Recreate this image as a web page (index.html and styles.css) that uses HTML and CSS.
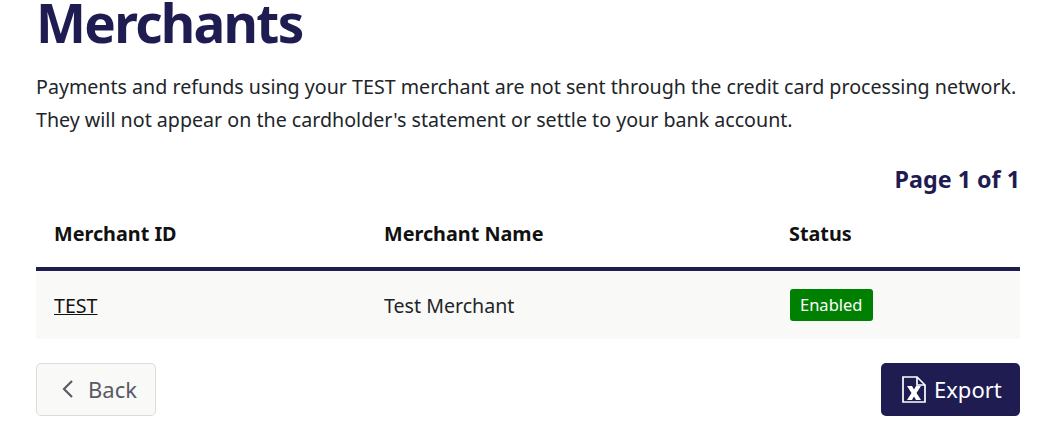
FILE: index.html
```html
<!DOCTYPE html>
<html lang="en">
<head>
<meta charset="utf-8">
<title>Merchants</title>
<link rel="stylesheet" href="styles.css">
</head>
<body>
<main class="page">
  <h1 class="title">Merchants</h1>
  <p class="intro">Payments and refunds using your TEST merchant are not sent through the credit card processing network. They will not appear on the cardholder's statement or settle to your bank account.</p>
  <div class="pager">Page 1 of 1</div>
  <table class="grid">
    <thead>
      <tr><th class="c1">Merchant ID</th><th class="c2">Merchant Name</th><th class="c3">Status</th></tr>
    </thead>
    <tbody>
      <tr>
        <td><a href="#">TEST</a></td>
        <td>Test Merchant</td>
        <td><span class="badge">Enabled</span></td>
      </tr>
    </tbody>
  </table>
  <div class="actions">
    <a class="btn back" href="#">
      <svg class="chev" width="14" height="20" viewBox="0 0 14 20"><path d="M11 2 3 10l8 8" fill="none" stroke="currentColor" stroke-width="2.2"/></svg>
      <span>Back</span>
    </a>
    <a class="btn export" href="#">
      <svg class="xls" width="24" height="27" viewBox="0 0 24 27"><path d="M1 1h14l8 8v17H1z" fill="none" stroke="currentColor" stroke-width="1.7"/><path d="M15 1v8h8" fill="none" stroke="currentColor" stroke-width="1.7"/><path d="M5 10h5l2 3.500 2-3.500h5l-4.500 7 4.500 7h-5l-2-3.500-2 3.500H5l4.500-7z" fill="currentColor"/></svg>
      <span>Export</span>
    </a>
  </div>
</main>
</body>
</html>
```
FILE: styles.css
```css
html, body { margin: 0; padding: 0; background: #fff; }
body { font-family: "Noto Sans", sans-serif; color: #212529; font-size: 19.6px; overflow: hidden; }
.page { padding: 0 28px 0 36px; }
.title { margin: 0; font-size: 53px; letter-spacing: -1.7px; line-height: 45px; font-weight: 700; color: #1f1c52; }
.intro { margin: 26px 0 0; line-height: 32.5px; font-size: 19.65px; }
.pager { margin-top: 27px; text-align: right; font-weight: 700; font-size: 23.3px; line-height: 32px; color: #1f1c52; }
.grid { width: 100%; margin-top: 4px; border-collapse: collapse; table-layout: fixed; }
.grid th { box-sizing: border-box; text-align: left; font-size: 19.8px; font-weight: 700; padding: 19px 18px 17px; line-height: 32px; border-bottom: 4px solid #1f1c52; color: #111; }
.c1 { width: 330px; }
.c2 { width: 405px; }
.grid td { padding: 16px 18px 14px; line-height: 36px; background: #f9f9f7; height: 36px; }
.grid a { color: #111; }
.badge { display: inline-block; background: #008000; color: #fff; font-size: 16.5px; line-height: 32px; padding: 0 10px; margin: 0 0 4px 1px; border-radius: 3px; vertical-align: middle; }
.actions { display: flex; justify-content: space-between; margin-top: 24px; }
.btn { display: flex; align-items: center; height: 53px; box-sizing: border-box; border-radius: 5px; text-decoration: none; font-size: 22px; }
.back { width: 120px; padding-left: 24px; gap: 13px; background: #f9f9f7; border: 1px solid #dcdcdc; color: #5a5a66; }
.export { width: 139px; padding-left: 21px; gap: 8px; background: #1f1c52; color: #fff; }
```
